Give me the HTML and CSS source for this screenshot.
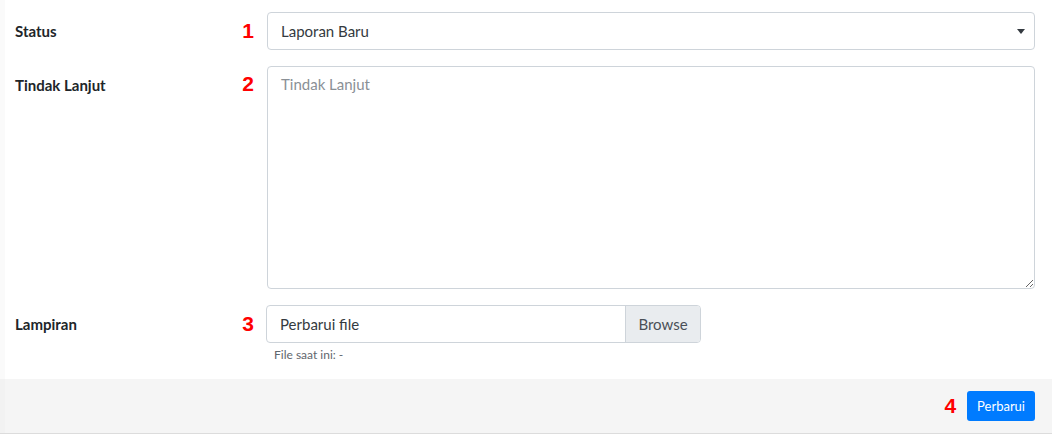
FILE: index.html
```html
<!DOCTYPE html>
<html lang="id">
<head>
<meta charset="utf-8">
<title>Form</title>
<link rel="stylesheet" href="styles.css">
</head>
<body>
<div class="card">
  <div class="card-body">
    <div class="form-row row-status">
      <label class="form-label">Status</label>
      <span class="num">1</span>
      <div class="select">
        <span class="select-text">Laporan Baru</span>
        <svg class="caret" width="8" height="5" viewBox="0 0 8 5"><path d="M0 0h8L4 5z" fill="#343a40"/></svg>
      </div>
    </div>
    <div class="form-row row-text">
      <label class="form-label">Tindak Lanjut</label>
      <span class="num">2</span>
      <textarea class="textarea" placeholder="Tindak Lanjut"></textarea>
    </div>
    <div class="form-row row-file">
      <label class="form-label">Lampiran</label>
      <span class="num">3</span>
      <div class="file-col">
        <div class="file-input">
          <span class="file-label">Perbarui file</span>
          <span class="file-browse">Browse</span>
        </div>
        <small class="help">File saat ini: -</small>
      </div>
    </div>
  </div>
  <div class="card-footer">
    <span class="num num-footer">4</span>
    <button class="btn">Perbarui</button>
  </div>
</div>
</body>
</html>
```
FILE: styles.css
```css
* { box-sizing: border-box; }
html, body { margin: 0; padding: 0; background: #fff; }
body {
  font-family: Lato, "Open Sans", sans-serif;
  color: #212529;
  width: 1052px;
  height: 437px;
  overflow: hidden;
}
.card {
  border-bottom: 1px solid #dcdcdc;
}
.card-body {
  border-left: 5px solid #fafafa;
  padding: 12px 17px 0 10px;
}
.form-row {
  display: flex;
  align-items: flex-start;
  margin-bottom: 16px;
}
.row-file { margin-bottom: 0; }
.form-label {
  flex: 0 0 218px;
  font-weight: 700;
  font-size: 15px;
  line-height: 22px;
  padding-top: 8px;
}
.num {
  flex: 0 0 34px;
  text-align: right;
  padding-right: 13px;
  font-family: "Liberation Sans", Arial, sans-serif;
  font-weight: 700;
  font-size: 21px;
  color: #ff0000;
  line-height: 24px;
  padding-top: 7px;
}
.row-text .num { padding-top: 6px; }
.select {
  flex: 1;
  height: 38px;
  border: 1px solid #ced4da;
  border-radius: 4px;
  display: flex;
  align-items: center;
  justify-content: space-between;
  padding: 0 9px 0 13px;
  font-size: 15px;
  color: #343a40;
}
.textarea {
  flex: 1;
  height: 223px;
  border: 1px solid #ced4da;
  border-radius: 4px;
  padding: 6px 13px;
  font-family: Lato, "Open Sans", sans-serif;
  font-size: 15px;
  line-height: 22px;
  color: #495057;
  resize: vertical;
  outline: none;
}
.textarea::placeholder { color: #8a9096; }
.file-col {
  display: flex;
  flex-direction: column;
  margin-left: -1px;
}
.file-input {
  width: 435px;
  height: 38px;
  border: 1px solid #ced4da;
  border-radius: 4px;
  display: flex;
  overflow: hidden;
  font-size: 15px;
  color: #343a40;
}
.file-label {
  flex: 1;
  display: flex;
  align-items: center;
  padding-left: 13px;
}
.file-browse {
  flex: 0 0 75px;
  background: #e9ecef;
  border-left: 1px solid #ced4da;
  display: flex;
  align-items: center;
  justify-content: center;
  color: #495057;
}
.help {
  font-size: 12px;
  color: #5f666d;
  padding-left: 8px;
  margin-top: 4px;
  line-height: 16px;
  margin-bottom: 16px;
}
.card-footer {
  background: #f5f5f5;
  border-left: 5px solid #f2f2f2;
  height: 54px;
  display: flex;
  justify-content: flex-end;
  align-items: center;
  padding-right: 17px;
}
.num-footer {
  flex: none;
  padding: 0;
  margin-right: 11px;
  line-height: 24px;
}
.btn {
  height: 30px;
  padding: 0 10px;
  background: #007bff;
  color: #fff;
  border: none;
  border-radius: 3px;
  font-family: Lato, "Open Sans", sans-serif;
  font-size: 13px;
}
```
